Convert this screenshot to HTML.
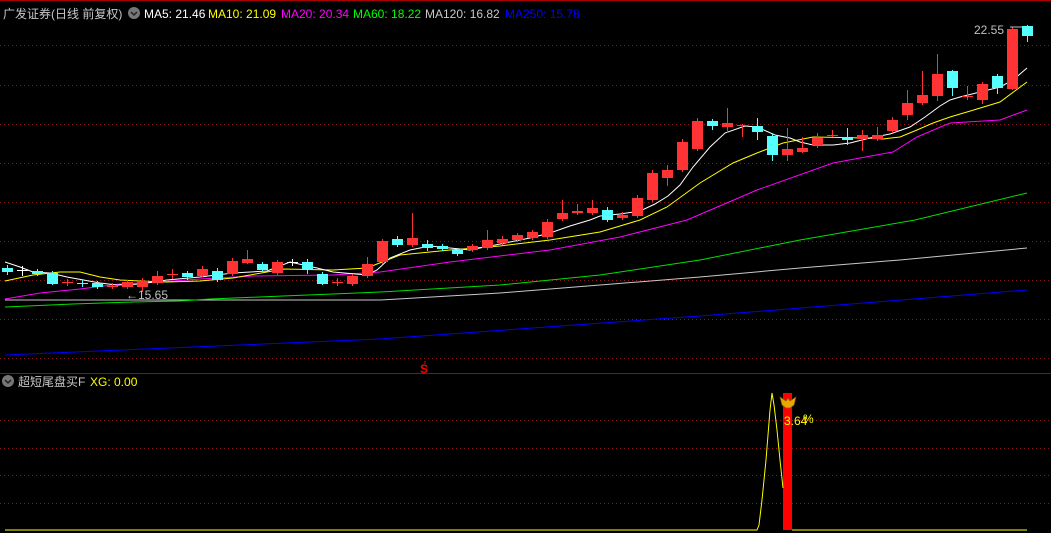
<!DOCTYPE html>
<html><head><meta charset="utf-8"><style>
html,body{margin:0;padding:0;background:#000;width:1051px;height:533px;overflow:hidden}
svg{display:block}
text{font-family:"Liberation Sans","Noto Sans CJK SC",sans-serif;font-size:12px}
</style></head><body>
<svg id="s" width="1051" height="533" xmlns="http://www.w3.org/2000/svg">
<rect width="1051" height="533" fill="#000"/>
<line x1="0" y1="0.5" x2="1051" y2="0.5" stroke="#a00" />
<g stroke="#8a1a1a" stroke-dasharray="1,3" id="grid"></g>
<line x1="0" y1="373.5" x2="1051" y2="373.5" stroke="#b00000"/>
<g id="ma" fill="none" stroke-width="1"></g>
<g id="c"></g>
<text x="3" y="18" fill="#c8c8c8">广发证券(日线 前复权)</text>
<circle cx="134" cy="13" r="6" fill="#777"/><path d="M131 12l3 3 3-3" stroke="#222" stroke-width="1.5" fill="none"/>
<text x="144" y="18" fill="#fff">MA5: 21.46</text>
<text x="208" y="18" fill="#ff0">MA10: 21.09</text>
<text x="281" y="18" fill="#f0f">MA20: 20.34</text>
<text x="353" y="18" fill="#0f0">MA60: 18.22</text>
<text x="425" y="18" fill="#c8c8c8">MA120: 16.82</text>
<text x="505" y="18" fill="#0000ff">MA250: 15.78</text>
<text x="974" y="34" fill="#c0c0c0">22.55</text>
<line x1="1010" y1="27" x2="1022" y2="27" stroke="#c0c0c0"/>
<text x="126" y="299" fill="#c0c0c0">←15.65</text>
<text x="420" y="373" fill="#f00" font-weight="bold">S</text>
<line x1="425" y1="361" x2="425" y2="364" stroke="#f00"/>
<circle cx="8" cy="381" r="6" fill="#777"/><path d="M5 380l3 3 3-3" stroke="#222" stroke-width="1.5" fill="none"/>
<text x="18" y="386" fill="#c8c8c8">超短尾盘买F</text>
<text x="90" y="386" fill="#ff0">XG: 0.00</text>
<rect x="783" y="393" width="9" height="137" fill="#f00"/>
<polyline fill="none" stroke="#ff0" points="5,530 757,530 759,525 762,500 766,460 770,410 772,393 774,405 777,430 780,460 783,488"/>
<line x1="792" y1="530" x2="1027" y2="530" stroke="#ff0"/>
<path d="M780 397l6 4 2-3 2 3 6-4-2 8-4 3h-4l-4-3z" fill="#e8a800" stroke="#8a5a00" stroke-width="0.7"/>
<text x="784" y="425" fill="#ff0">3.64</text>
<text x="803" y="423" fill="#ff0" font-size="10">%</text>
</svg>
<script>
var ns="http://www.w3.org/2000/svg",g=document.getElementById('grid');
[45,85,124,163,202,241,280,319,358,420,448,475,503].forEach(function(y){var l=document.createElementNS(ns,'line');l.setAttribute('x1',0);l.setAttribute('x2',1051);l.setAttribute('y1',y+.5);l.setAttribute('y2',y+.5);g.appendChild(l);});
var ma=document.getElementById('ma');
function pl(c,p){var e=document.createElementNS(ns,'polyline');e.setAttribute('stroke',c);e.setAttribute('points',p);ma.appendChild(e);}
pl('#0000ff','5,355 380,339 700,316 1027,290');
pl('#c8c8c8','5,300 380,300 500,293 600,285 700,277 800,268 900,260 1027,248');
pl('#00e000','5,307 73,304 133,302 180,301 210,299 283,296 333,294 380,292 500,285 600,275 700,260 800,240 915,220 1027,193');
pl('#ff00ff','5,299 40,293 80,289 120,284 160,282 200,279 253,276 333,275 380,272 450,262 550,250 620,237 687,220 757,190 833,163 893,152 917,137 950,123 1000,120 1027,110');
pl('#ffff00','5,281 33,275 60,272 80,272 100,277 120,280 140,281 167,282 200,281 233,278 267,272 283,269 333,270 367,268 400,255 450,250 500,246 550,240 600,232 640,220 667,207 700,183 733,163 757,153 783,143 813,137 867,138 883,139 900,137 917,130 933,123 950,117 967,112 1000,102 1027,82');
pl('#ffffff','5,262 20,267 33,272 50,273 67,277 100,283 117,285 140,284 167,280 200,277 233,273 267,271 290,262 317,268 333,272 367,275 377,270 390,258 410,250 430,246 450,248 470,250 490,246 510,242 530,238 550,233 570,226 590,220 600,216 620,214 640,211 655,204 668,196 680,185 693,167 710,147 725,133 745,126 757,127 775,135 790,138 800,142 813,145 833,145 850,143 870,138 890,134 910,127 925,117 940,106 950,100 960,97 980,92 1000,87 1013,80 1027,68');
// [color, bodyTop, bodyBot, hi, lo]
var C=[['c',268,272,265,275],['w',270,271,266,276],['c',271,274,269,276],['c',273,284,271,285],['r',282,283,279,286],['c',283,284,280,287],['c',283,287,281,289],['r',286,287,283,289],['r',282,287,280,289],['r',281,287,278,292],['r',276,283,271,285],['r',274,275,269,279],['c',273,277,271,280],['r',269,276,266,277],['c',271,280,268,282],['r',261,274,258,276],['r',259,263,250,264],['c',264,270,262,272],['r',262,273,260,275],['w',262,263,259,266],['c',262,270,259,274],['c',274,284,272,285],['r',282,283,278,286],['r',276,284,274,286],['r',264,276,257,278],['r',241,262,239,264],['c',239,245,236,247],['r',238,245,213,247],['c',244,248,240,251],['c',246,249,244,251],['c',250,254,248,256],['r',246,250,244,252],['r',240,248,230,250],['r',239,243,236,245],['r',235,240,233,242],['r',232,238,230,240],['r',222,237,219,239],['r',213,219,200,221],['r',211,213,204,215],['r',208,213,200,215],['c',210,220,207,222],['r',215,218,212,220],['r',198,216,195,218],['r',173,200,170,202],['r',170,178,165,186],['r',142,170,139,172],['r',121,149,118,151],['c',121,126,119,130],['r',123,127,108,133],['r',125,126,124,137],['c',126,132,118,140],['c',136,155,133,161],['r',149,155,128,161],['r',148,152,137,153],['r',138,145,133,148],['r',135,136,130,137],['c',137,140,128,145],['r',135,139,130,151],['r',135,139,127,141],['r',120,131,117,133],['r',103,115,90,120],['r',95,103,71,105],['r',74,96,54,101],['c',71,88,70,96],['r',96,97,86,100],['r',84,100,82,104],['c',76,88,74,94],['r',29,89,27,90],['c',26,36,25,42]];
var cg=document.getElementById('c');
C.forEach(function(d,i){var x=7+i*15,col=d[0]=='r'?'#ff3333':d[0]=='c'?'#55ffff':'#ffffff';
var l=document.createElementNS(ns,'line');l.setAttribute('x1',x+.5);l.setAttribute('x2',x+.5);l.setAttribute('y1',d[3]);l.setAttribute('y2',d[4]);l.setAttribute('stroke',col);cg.appendChild(l);
var r=document.createElementNS(ns,'rect');r.setAttribute('x',x-5);r.setAttribute('width',11);r.setAttribute('y',d[1]);r.setAttribute('height',Math.max(1,d[2]-d[1]));r.setAttribute('fill',col);cg.appendChild(r);});
</script>
</body></html>
